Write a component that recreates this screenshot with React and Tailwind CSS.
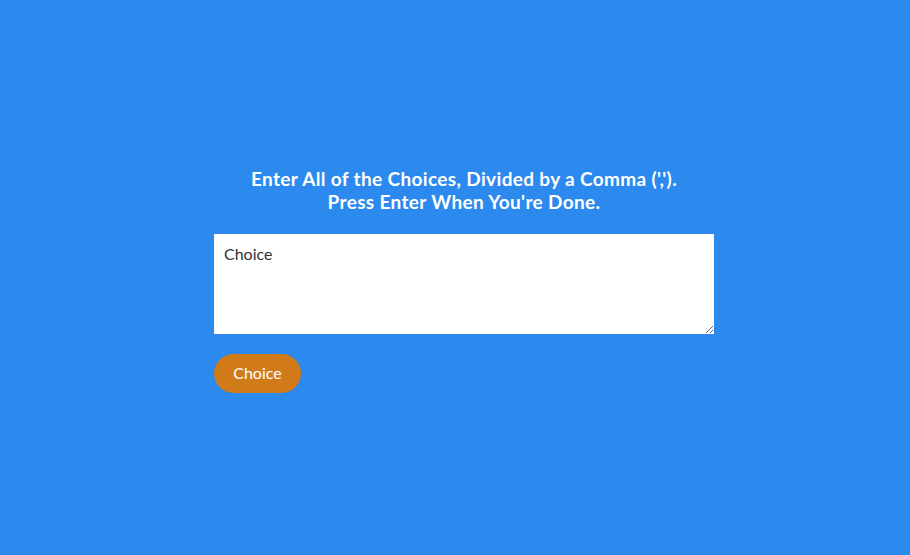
import React, { useState } from 'react';

export default function App() {
  const [choices, setChoices] = useState('Choice');

  return (
    <div
      className="flex h-[555px] w-full items-start justify-center bg-[#2c89ee] pl-[18px] pt-[167px]"
      style={{ fontFamily: 'Lato, "Open Sans", sans-serif' }}
    >
      <div className="flex w-[500px] flex-col">
        <h2 className="-mx-[40px] text-center text-[19px] font-bold leading-[23px] tracking-[0.35px] text-white">
          Enter All of the Choices, Divided by a Comma (',').
          <br />
          Press Enter When You're Done.
        </h2>

        <textarea
          value={choices}
          onChange={(e) => setChoices(e.target.value)}
          className="mt-[21px] h-[100px] w-[500px] resize-y bg-white px-[10px] py-[10px] text-[16px] leading-[20px] text-[#333] outline-none"
        />

        <div className="mt-[20px]">
          <button className="h-[39px] w-[87px] rounded-full bg-[#d07a1a] pb-[1px] text-[16px] text-white">
            Choice
          </button>
        </div>
      </div>
    </div>
  );
}
